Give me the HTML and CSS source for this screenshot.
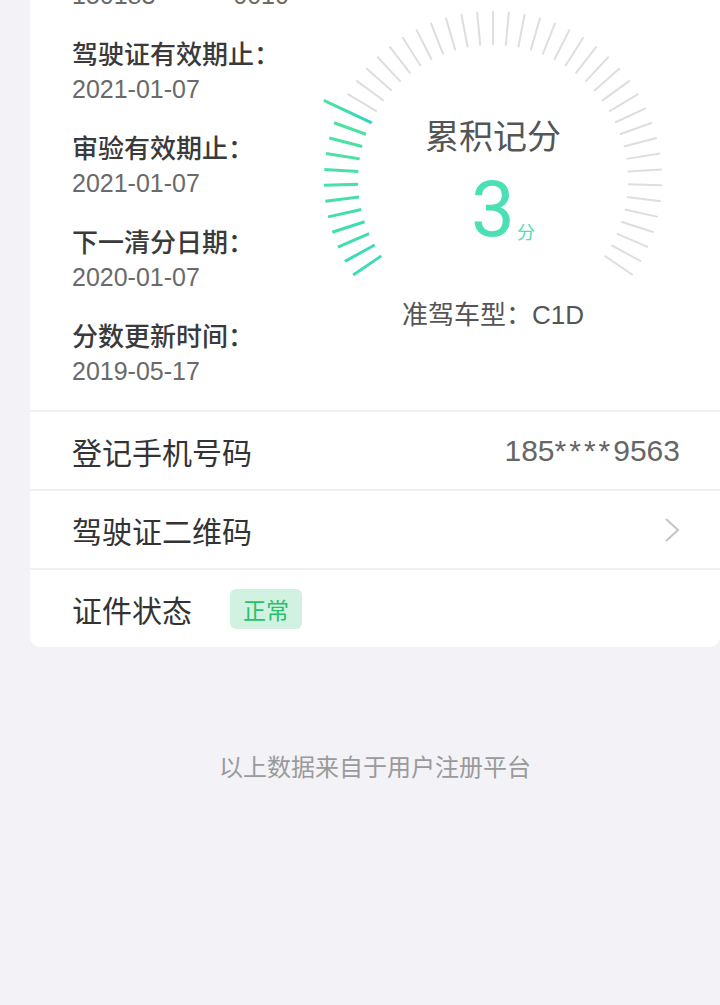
FILE: index.html
```html
<!DOCTYPE html>
<html lang="zh-CN">
<head>
<meta charset="utf-8">
<title>驾驶证</title>
<link rel="stylesheet" href="styles.css">
</head>
<body>
<main class="page">
  <section class="card">
    <div class="summary">
      <dl class="fields">
        <div class="field"><dt>驾驶证号：</dt><dd>150183********0010</dd></div>
        <div class="field"><dt>驾驶证有效期止：</dt><dd>2021-01-07</dd></div>
        <div class="field"><dt>审验有效期止：</dt><dd>2021-01-07</dd></div>
        <div class="field"><dt>下一清分日期：</dt><dd>2020-01-07</dd></div>
        <div class="field"><dt>分数更新时间：</dt><dd>2019-05-17</dd></div>
      </dl>
      <div class="gauge">
        <div class="dial">
          <svg width="380" height="300" viewBox="0 0 380 300" aria-hidden="true">
            <defs>
              <linearGradient id="pointer" gradientUnits="userSpaceOnUse" x1="190" y1="3" x2="190" y2="56">
                <stop offset="0" stop-color="#4fe39e"/>
                <stop offset="1" stop-color="#33d0c6"/>
              </linearGradient>
            </defs>
            <g class="on" stroke="#45deaa" stroke-width="3">
              <line x1="190" y1="21" x2="190" y2="55" transform="rotate(-124.2 190 190)" stroke="#3fdbb6"/>
              <line x1="190" y1="21" x2="190" y2="55" transform="rotate(-118.8 190 190)" stroke="#40dbb4"/>
              <line x1="190" y1="21" x2="190" y2="55" transform="rotate(-113.4 190 190)" stroke="#41dcb2"/>
              <line x1="190" y1="21" x2="190" y2="55" transform="rotate(-108 190 190)" stroke="#43dcb0"/>
              <line x1="190" y1="21" x2="190" y2="55" transform="rotate(-102.6 190 190)" stroke="#44ddae"/>
              <line x1="190" y1="21" x2="190" y2="55" transform="rotate(-97.2 190 190)" stroke="#46deac"/>
              <line x1="190" y1="21" x2="190" y2="55" transform="rotate(-91.8 190 190)" stroke="#47dfaa"/>
              <line x1="190" y1="21" x2="190" y2="55" transform="rotate(-86.4 190 190)" stroke="#49e0a8"/>
              <line x1="190" y1="21" x2="190" y2="55" transform="rotate(-81 190 190)" stroke="#4ae0a6"/>
              <line x1="190" y1="21" x2="190" y2="55" transform="rotate(-75.6 190 190)" stroke="#4be1a4"/>
              <line x1="190" y1="21" x2="190" y2="55" transform="rotate(-70.2 190 190)" stroke="#4de2a2"/>
              <line x1="190" y1="3" x2="190" y2="56" transform="rotate(-64.8 190 190)" stroke="url(#pointer)"/>
            </g>
            <g class="off" stroke="#dedede" stroke-width="2">
              <line x1="190" y1="21" x2="190" y2="55" transform="rotate(-59.4 190 190)"/>
              <line x1="190" y1="21" x2="190" y2="55" transform="rotate(-54 190 190)"/>
              <line x1="190" y1="21" x2="190" y2="55" transform="rotate(-48.6 190 190)"/>
              <line x1="190" y1="21" x2="190" y2="55" transform="rotate(-43.2 190 190)"/>
              <line x1="190" y1="21" x2="190" y2="55" transform="rotate(-37.8 190 190)"/>
              <line x1="190" y1="21" x2="190" y2="55" transform="rotate(-32.4 190 190)"/>
              <line x1="190" y1="21" x2="190" y2="55" transform="rotate(-27 190 190)"/>
              <line x1="190" y1="21" x2="190" y2="55" transform="rotate(-21.6 190 190)"/>
              <line x1="190" y1="21" x2="190" y2="55" transform="rotate(-16.2 190 190)"/>
              <line x1="190" y1="21" x2="190" y2="55" transform="rotate(-10.8 190 190)"/>
              <line x1="190" y1="21" x2="190" y2="55" transform="rotate(-5.4 190 190)"/>
              <line x1="190" y1="21" x2="190" y2="55"/>
              <line x1="190" y1="21" x2="190" y2="55" transform="rotate(5.4 190 190)"/>
              <line x1="190" y1="21" x2="190" y2="55" transform="rotate(10.8 190 190)"/>
              <line x1="190" y1="21" x2="190" y2="55" transform="rotate(16.2 190 190)"/>
              <line x1="190" y1="21" x2="190" y2="55" transform="rotate(21.6 190 190)"/>
              <line x1="190" y1="21" x2="190" y2="55" transform="rotate(27 190 190)"/>
              <line x1="190" y1="21" x2="190" y2="55" transform="rotate(32.4 190 190)"/>
              <line x1="190" y1="21" x2="190" y2="55" transform="rotate(37.8 190 190)"/>
              <line x1="190" y1="21" x2="190" y2="55" transform="rotate(43.2 190 190)"/>
              <line x1="190" y1="21" x2="190" y2="55" transform="rotate(48.6 190 190)"/>
              <line x1="190" y1="21" x2="190" y2="55" transform="rotate(54 190 190)"/>
              <line x1="190" y1="21" x2="190" y2="55" transform="rotate(59.4 190 190)"/>
              <line x1="190" y1="21" x2="190" y2="55" transform="rotate(64.8 190 190)"/>
              <line x1="190" y1="21" x2="190" y2="55" transform="rotate(70.2 190 190)"/>
              <line x1="190" y1="21" x2="190" y2="55" transform="rotate(75.6 190 190)"/>
              <line x1="190" y1="21" x2="190" y2="55" transform="rotate(81 190 190)"/>
              <line x1="190" y1="21" x2="190" y2="55" transform="rotate(86.4 190 190)"/>
              <line x1="190" y1="21" x2="190" y2="55" transform="rotate(91.8 190 190)"/>
              <line x1="190" y1="21" x2="190" y2="55" transform="rotate(97.2 190 190)"/>
              <line x1="190" y1="21" x2="190" y2="55" transform="rotate(102.6 190 190)"/>
              <line x1="190" y1="21" x2="190" y2="55" transform="rotate(108 190 190)"/>
              <line x1="190" y1="21" x2="190" y2="55" transform="rotate(113.4 190 190)"/>
              <line x1="190" y1="21" x2="190" y2="55" transform="rotate(118.8 190 190)"/>
              <line x1="190" y1="21" x2="190" y2="55" transform="rotate(124.2 190 190)"/>
            </g>
          </svg>
          <div class="dial-title">累积记分</div>
          <div class="dial-score"><span class="num">3<span class="unit">分</span></span></div>
        </div>
        <div class="license-type">准驾车型：<span class="latin">C1D</span></div>
      </div>
    </div>
    <div class="row">
      <span class="row-label">登记手机号码</span>
      <span class="row-value">185<span class="mask">****</span>9563</span>
    </div>
    <div class="row">
      <span class="row-label">驾驶证二维码</span>
      <svg class="chevron" width="16" height="26" viewBox="0 0 16 26" aria-hidden="true">
        <polyline points="2,2 14,13 2,24" fill="none" stroke="#c4c4c8" stroke-width="2"/>
      </svg>
    </div>
    <div class="row">
      <span class="row-label">证件状态</span>
      <span class="badge">正常</span>
    </div>
  </section>
  <p class="source">以上数据来自于用户注册平台</p>
</main>
</body>
</html>
```

FILE: styles.css
```css
html, body {
  margin: 0;
  padding: 0;
}

body {
  background: #f2f2f7;
  font-family: "Noto Sans CJK SC", sans-serif;
  overflow: hidden;
}

.page {
  width: 720px;
  height: 1005px;
  overflow: hidden;
}

.card {
  margin: -80px 0 0 30px;
  background: #ffffff;
  border-radius: 0 0 10px 10px;
}

.summary {
  display: flex;
  padding: 21px 37px 21px 42px;
}

.fields {
  flex: 1;
  margin: 0;
  display: flex;
  flex-direction: column;
  gap: 22px;
}

.field dt {
  font-size: 26px;
  line-height: 36px;
  font-weight: 500;
  color: #3a3a3a;
}

.field dd {
  margin: 0;
  font-family: "Liberation Sans", sans-serif;
  font-size: 25px;
  line-height: 36px;
  color: #6a6a6a;
}

.gauge {
  width: 380px;
  margin-top: 49px;
  display: flex;
  flex-direction: column;
  align-items: center;
  align-self: flex-start;
}

.dial {
  position: relative;
  width: 380px;
  height: 300px;
}

.dial svg {
  display: block;
}

.dial-title {
  position: absolute;
  top: 125px;
  left: 0;
  right: 0;
  text-align: center;
  font-size: 34px;
  line-height: 40px;
  color: #555555;
  font-weight: 400;
}

.dial-score {
  position: absolute;
  top: 181px;
  left: 0;
  right: 0;
  text-align: center;
}

.num {
  position: relative;
  display: inline-block;
  font-family: Roboto, "Liberation Sans", sans-serif;
  font-weight: 400;
  font-size: 78px;
  line-height: 78px;
  color: #4be0b4;
}

.unit {
  position: absolute;
  left: 100%;
  bottom: 9px;
  margin-left: 2px;
  font-family: "Noto Sans CJK SC", sans-serif;
  font-weight: 400;
  font-size: 18px;
  line-height: 18px;
  white-space: nowrap;
  color: #4be0b4;
}

.license-type {
  margin-top: 5px;
  font-size: 26px;
  line-height: 36px;
  color: #555555;
}

.latin {
  font-family: "Liberation Sans", sans-serif;
}

.row {
  display: flex;
  align-items: center;
  height: 77px;
  padding: 0 40px 0 42px;
  border-top: 2px solid #f0f0f3;
}

.row-label {
  font-size: 30px;
  color: #333333;
}

.row-value {
  margin-left: auto;
  font-family: "Liberation Sans", sans-serif;
  font-size: 30px;
  color: #666666;
}

.mask {
  letter-spacing: 3px;
}

.chevron {
  margin-left: auto;
  display: block;
}

.badge {
  margin-left: 38px;
  padding: 0 13px;
  height: 40px;
  line-height: 40px;
  border-radius: 6px;
  background: #d2f2e1;
  color: #27c06d;
  font-size: 23px;
}

.source {
  margin: 102px 0 0 30px;
  text-align: center;
  font-size: 24px;
  line-height: 34px;
  color: #9a9a9a;
}
```
